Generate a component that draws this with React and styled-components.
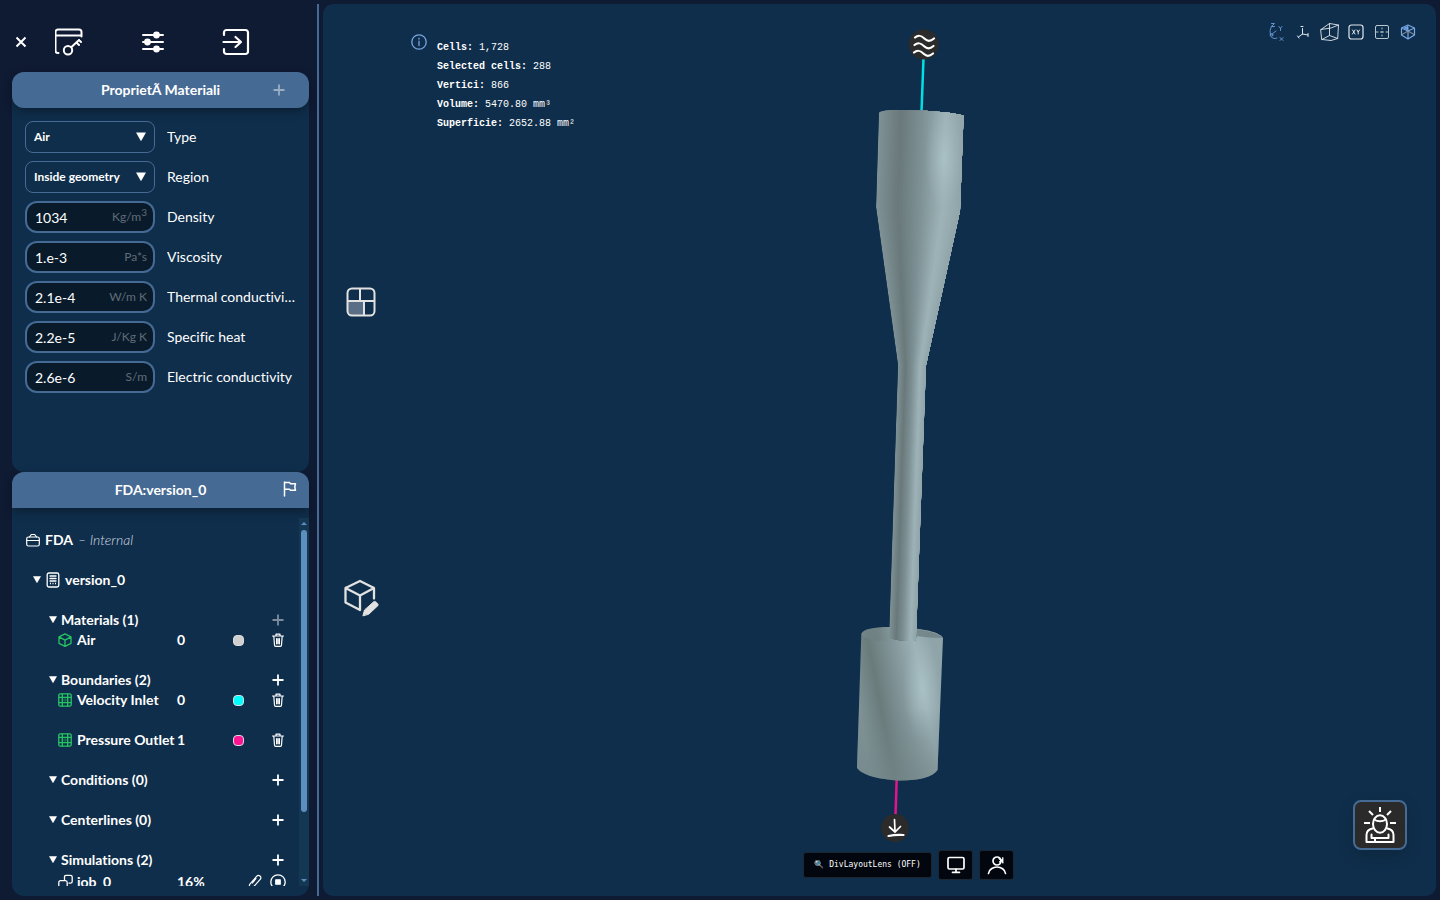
import React from "react";
import styled, { createGlobalStyle } from "styled-components";

const c = {
  page: "#0f1a33",
  panel: "#0f2e4b",
  accent: "#456a94",
  line: "#456a94",
  field: "#091b2b",
  text: "#ffffff",
};

const GlobalStyle = createGlobalStyle`
  *, *::before, *::after { box-sizing: border-box; }
  html, body, #root { height: 100%; }
  body {
    margin: 0;
    background: ${c.page};
    color: ${c.text};
    font-family: Lato, "Open Sans", sans-serif;
    font-size: 14px;
    line-height: 20px;
    font-variant-ligatures: none;
  }
  button { font: inherit; color: inherit; background: none; border: 0; padding: 0; margin: 0; cursor: pointer; }
  h1, h2, h3, ul, li, dl, dt, dd { margin: 0; padding: 0; font: inherit; list-style: none; }
`;

const Page = styled.div`
  display: flex;
  height: 100%;
  padding: 4px 4px 4px 12px;
`;

const Sidebar = styled.aside`
  display: flex;
  flex-direction: column;
  flex: 0 0 297px;
  min-height: 0;
`;

const Divider = styled.div`
  flex: 0 0 2px;
  margin: 0 4px 0 8px;
  background: ${c.line};
`;

const TopBar = styled.nav`
  display: flex;
  align-items: center;
  flex: 0 0 68px;
  padding: 8px 0 0 2px;
`;

const CloseButton = styled.button`
  display: grid;
  place-items: center;
  width: 14px;
  height: 28px;
`;

const NavButton = styled.button`
  display: grid;
  place-items: center;
  width: 83px;
  height: 40px;
`;

const Panel = styled.section`
  display: flex;
  flex-direction: column;
  flex: ${(p) => (p.$grow ? "1 1 0" : "0 0 400px")};
  min-height: 0;
  background: ${c.panel};
  border-radius: 12px;
`;

const PanelHeader = styled.header`
  display: grid;
  grid-template-columns: 36px 1fr 36px;
  align-items: center;
  justify-items: center;
  flex: 0 0 36px;
  padding: 0 12px;
  background: ${c.accent};
  border-radius: ${(p) => (p.$flat ? "12px 12px 0 0" : "12px")};
  box-shadow: 0 4px 10px rgba(0, 0, 0, 0.3);
`;

const PanelTitle = styled.h2`
  grid-column: 2;
  font-weight: 700;
`;

const IconButton = styled.button`
  display: grid;
  place-items: center;
  justify-self: ${(p) => (p.$end ? "end" : "auto")};
  opacity: ${(p) => (p.$dim ? 0.45 : 1)};
`;

const Form = styled.form`
  display: flex;
  flex-direction: column;
  gap: 8px;
  padding: 13px;
`;

const FieldRow = styled.div`
  display: grid;
  grid-template-columns: 130px 1fr;
  gap: 12px;
  align-items: center;
`;

const FieldLabel = styled.label`
  overflow: hidden;
  white-space: nowrap;
  text-overflow: ellipsis;
`;

const SelectBox = styled.div`
  display: grid;
  grid-template-columns: 1fr 10px;
  align-items: center;
  height: 32px;
  padding-right: 8px;
  border: 1px solid ${c.line};
  border-radius: 8px;
`;

const Select = styled.select`
  appearance: none;
  min-width: 0;
  height: 30px;
  padding: 0 0 0 8px;
  border: 0;
  outline: 0;
  background: transparent;
  color: inherit;
  font: 700 12px/20px Lato, sans-serif;
`;

const InputBox = styled.div`
  display: flex;
  align-items: center;
  height: 32px;
  padding: 0 6px 0 8px;
  background: ${c.field};
  border: 2px solid ${c.line};
  border-radius: 12px;
`;

const Input = styled.input`
  flex: 1;
  width: 0;
  height: 28px;
  padding: 0;
  border: 0;
  outline: 0;
  background: transparent;
  color: inherit;
  font: 400 14px/20px Lato, sans-serif;
`;

const Unit = styled.span`
  color: #606c78;
  font-size: 12px;
  line-height: 20px;

  sup { font-size: 10px; line-height: 0; }
`;

const TreeArea = styled.div`
  display: flex;
  flex: 1;
  min-height: 0;
  margin: 10px 0;
`;

const Tree = styled.div`
  flex: 1;
  min-width: 0;
  overflow: hidden;
  padding: 12px 5px 0 0;
  font-weight: 700;
`;

const Scrollbar = styled.div`
  display: flex;
  flex-direction: column;
  align-items: center;
  gap: 3px;
  width: 10px;
  padding: 3px 0;
  background: #143754;
`;

const ScrollTrack = styled.div`
  flex: 1;
  width: 6px;
`;

const ScrollThumb = styled.div`
  height: 82%;
  border-radius: 3px;
  background: #5c8fbd;
`;

const ProjectRow = styled.div`
  display: flex;
  align-items: center;
  gap: 5px;
  padding-left: 14px;
  margin-bottom: 20px;
`;

const Origin = styled.em`
  color: #d3dae1;
  font-weight: 300;
`;

const VersionRow = styled.div`
  display: flex;
  align-items: center;
  gap: 5px;
  padding-left: 21px;
  margin-bottom: 20px;
`;

const Group = styled.section`
  margin-bottom: 20px;
`;

const GroupHeader = styled.header`
  display: grid;
  grid-template-columns: 12px 1fr 32px;
  align-items: center;
  padding-left: 37px;
`;

const GroupTitle = styled.h3`
  font-weight: 700;
`;

const Items = styled.ul`
  display: flex;
  flex-direction: column;
  gap: 20px;
`;

const Item = styled.li`
  display: grid;
  grid-template-columns: 19px 100px 1fr 20px 14px 32px;
  align-items: center;
  height: ${(p) => (p.$tall ? "24px" : "20px")};
  padding-left: 46px;
  white-space: nowrap;
`;

const Cell = styled.span`
  display: grid;
  justify-items: ${(p) => (p.$start ? "start" : "center")};
`;

const Swatch = styled.span`
  width: 11px;
  height: 11px;
  border: 1px solid #d9dde0;
  border-radius: 4px;
  background: ${(p) => p.$color};
`;

const Viewer = styled.main`
  position: relative;
  display: grid;
  grid-template-rows: auto 1fr auto;
  flex: 1;
  min-width: 0;
  background: ${c.panel};
  border-radius: 10px;
  overflow: hidden;
`;

const Scene = styled.svg`
  position: absolute;
  inset: 0;
  width: 100%;
  height: 100%;
`;

const ViewerTop = styled.div`
  position: relative;
  display: flex;
  justify-content: space-between;
  align-items: flex-start;
  padding: 18px 18px 0 88px;
`;

const Stats = styled.div`
  display: flex;
  gap: 10px;
  padding-top: 12px;
`;

const StatList = styled.dl`
  padding-top: 4px;
  font: 400 10px/19px "Liberation Mono", monospace;
`;

const Stat = styled.div`
  display: flex;
  gap: 6px;

  dt { font-weight: 700; }
`;

const ViewTools = styled.div`
  display: flex;
  gap: 6px;
`;

const ViewTool = styled.button`
  display: grid;
  place-items: center;
  width: ${(p) => (p.$wide ? "21px" : "20px")};
  height: 20px;
`;

const SideTools = styled.div`
  position: absolute;
  top: 0;
  bottom: 0;
  left: 18px;
  display: flex;
  flex-direction: column;
  align-items: center;
  justify-content: center;
  gap: 256px;
`;

const SideTool = styled.button`
  display: grid;
  place-items: center;
  width: 40px;
  height: 40px;
`;

const ViewerBottom = styled.div`
  position: relative;
  grid-row: 3;
  display: flex;
  align-items: center;
  justify-content: center;
  gap: 6px;
  padding: 0 0 16px 58px;
`;

const DarkButton = styled.button`
  display: flex;
  align-items: center;
  justify-content: center;
  gap: 5px;
  width: ${(p) => (p.$text ? "129px" : "35px")};
  height: ${(p) => (p.$text ? "26px" : "30px")};
  border: 1px solid #1d2731;
  border-radius: 3px;
  background: #02060e;
  font: 400 8px/12px "DejaVu Sans Mono", monospace;
`;

const AssistantButton = styled.button`
  position: absolute;
  right: 29px;
  bottom: 46px;
  display: grid;
  place-items: center;
  width: 54px;
  height: 50px;
  border: 2px solid ${c.line};
  border-radius: 8px;
  background: #2a2a2a;
  box-shadow: 0 6px 16px rgba(0, 0, 0, 0.15);
`;

const Svg = ({ w, h = w, box, sw = 1.5, color = "currentColor", children }) => (
  <svg width={w} height={h} viewBox={box || `0 0 ${w} ${h}`} fill="none" stroke={color}
    strokeWidth={sw} strokeLinecap="round" strokeLinejoin="round" aria-hidden="true">
    {children}
  </svg>
);

const Caret = ({ w = 8, h = 8 }) => (
  <Svg w={w} h={h} box="0 0 8 8" sw={0}><path d="M0 0.3h8L4 7.300z" fill="#fff" /></Svg>
);

const Plus = () => <Svg w={12} sw={1.800}><path d="M6 .5v11M.5 6h11" strokeLinecap="butt" /></Svg>;

const Trash = () => (
  <Svg w={14} sw={1.200}>
    <path d="M1.500 3h11M5 3V1.200h4V3M2.800 3l.7 9c0 .8.5 1.300 1.200 1.300h4.600c.7 0 1.200-.5 1.200-1.300l.7-9M5.600 5.500v5.300M7 5.500v5.300M8.400 5.500v5.300" />
  </Svg>
);

const GreenCube = () => (
  <Svg w={14} sw={1.300} color="#27c463">
    <path d="M7 .8l6 3.100v6.400L7 13.300 1 10.300V3.900zM1 3.900l6 3.200 6-3.200M7 7.100v6" />
  </Svg>
);

const GreenGrid = () => (
  <Svg w={14} sw={1.300} color="#27c463">
    <rect x=".8" y=".8" width="12.400" height="12.400" rx="1.500" />
    <path d="M4.300.8v12.400M9.700.8v12.400M.8 4.300h12.400M.8 9.700h12.400" />
    <path d="M7 4.300v5.400M4.300 7h5.400" opacity=".35" />
  </Svg>
);

const JobIcon = () => (
  <Svg w={15} h={16} sw={1.300}>
    <path d="M6.500 5.500V3C6.500 1.800 7 1.300 8 1.300h4.500c1 0 1.700.5 1.700 1.700v4.500c0 1-.7 1.700-1.700 1.700H11M.8 14.500V8.500c0-1.200.7-1.900 1.700-1.900h5c1 0 1.700.7 1.700 1.900v6z" />
  </Svg>
);

const Pencil = () => (
  <Svg w={14} h={16} sw={1.200}>
    <path d="M.8 14.500l.9-4.200L8.800 2.200c.8-.9 2.200-1 3.200-.2s1.200 2.200.4 3.200L5.200 13.200zM8 4.500L4.500 9" />
  </Svg>
);

const StopIcon = () => (
  <Svg w={16} sw={1.300}>
    <circle cx="8" cy="8" r="7.200" /><rect x="5.800" y="5.800" width="4.400" height="4.400" fill="#fff" />
  </Svg>
);

const fields = [
  { id: "density", label: "Density", value: "1034", unit: <>Kg/m<sup>3</sup></> },
  { id: "viscosity", label: "Viscosity", value: "1.e-3", unit: "Pa*s" },
  { id: "thermal", label: "Thermal conductivity", value: "2.1e-4", unit: "W/m K" },
  { id: "heat", label: "Specific heat", value: "2.2e-5", unit: "J/Kg K" },
  { id: "electric", label: "Electric conductivity", value: "2.6e-6", unit: "S/m" },
];

const groups = [
  { title: "Materials (1)", dim: true, items: [{ name: "Air", value: "0", color: "#cfcfcf", icon: <GreenCube /> }] },
  {
    title: "Boundaries (2)",
    items: [
      { name: "Velocity Inlet", value: "0", color: "#00ffff", icon: <GreenGrid /> },
      { name: "Pressure Outlet", value: "1", color: "#ff1493", icon: <GreenGrid /> },
    ],
  },
  { title: "Conditions (0)", items: [] },
  { title: "Centerlines (0)", items: [] },
  { title: "Simulations (2)", items: [{ name: "job_0", value: "16%", job: true, icon: <JobIcon /> }] },
];

const stats = [
  ["Cells:", "1,728"],
  ["Selected cells:", "288"],
  ["Vertici:", "866"],
  ["Volume:", "5470.80 mm³"],
  ["Superficie:", "2652.88 mm²"],
];

function SelectField({ id, label, value }) {
  return (
    <FieldRow>
      <SelectBox>
        <Select id={id} defaultValue={value}><option>{value}</option></Select>
        <Caret w={10} h={10} />
      </SelectBox>
      <FieldLabel htmlFor={id}>{label}</FieldLabel>
    </FieldRow>
  );
}

function TreeItem({ item }) {
  return (
    <Item $tall={item.job}>
      <Cell $start>{item.icon}</Cell>
      <span>{item.name}</span>
      <span>{item.value}</span>
      <Cell>{item.color && <Swatch $color={item.color} />}</Cell>
      <Cell>{item.job && <IconButton aria-label="Edit"><Pencil /></IconButton>}</Cell>
      <Cell>
        <IconButton aria-label={item.job ? "Stop" : "Delete"}>{item.job ? <StopIcon /> : <Trash />}</IconButton>
      </Cell>
    </Item>
  );
}

// Shading across the revolved surface, from its left silhouette (0) to its right one (1).
const shades = [
  [0, [126, 145, 148]],
  [0.25, [106, 121, 123]],
  [0.5, [125, 144, 148]],
  [0.78, [158, 179, 184]],
  [1, [144, 164, 168]],
];
const leftEdge = [[879, 104], [876, 207], [898, 365], [889, 642]];
const rightEdge = [[964, 104], [960, 211], [926, 366], [916, 642]];
const STRIPS = 48;

function shadeAt(t) {
  const i = Math.max(1, shades.findIndex(([s]) => s >= t));
  const [a, ca] = shades[i - 1];
  const [b, cb] = shades[i];
  const k = (t - a) / (b - a);
  return `rgb(${ca.map((v, n) => Math.round(v + (cb[n] - v) * k)).join(",")})`;
}

function Loft() {
  return Array.from({ length: STRIPS }, (_, i) => {
    const t = i / STRIPS;
    const start = leftEdge.map(([x, y], n) => [
      x + (rightEdge[n][0] - x) * t,
      y + (rightEdge[n][1] - y) * t,
    ]);
    const points = [...start, ...[...rightEdge].reverse()].map((p) => p.join(",")).join(" ");
    return <polygon key={i} points={points} fill={shadeAt(t)} />;
  });
}

function Model() {
  return (
    <Scene viewBox="323 4 1113 892" preserveAspectRatio="xMidYMid meet" role="img" aria-label="Nozzle geometry">
      <defs>
        <clipPath id="body">
          <path d="M879 112.500Q882 110 907 110.300Q945 111 964 115.500L960.500 211L926 366L916 640Q902 642 888.800 638L898 365L876 207z" />
        </clipPath>
        <linearGradient id="outlet" gradientUnits="userSpaceOnUse" x1="860" y1="714" x2="942" y2="698">
          <stop offset="0" stopColor="#7f9396" />
          <stop offset=".26" stopColor="#6a7b7b" />
          <stop offset=".48" stopColor="#7d9093" />
          <stop offset=".8" stopColor="#9cb2b7" />
          <stop offset="1" stopColor="#8fa4a8" />
        </linearGradient>
        <radialGradient id="shine">
          <stop offset="0" stopColor="#b0c8cd" stopOpacity=".65" />
          <stop offset="1" stopColor="#a6bdc2" stopOpacity="0" />
        </radialGradient>
        <linearGradient id="fade" x1="0" x2="0" y1="0" y2="1">
          <stop offset=".5" stopColor="#728588" stopOpacity="0" />
          <stop offset="1" stopColor="#728588" stopOpacity=".65" />
        </linearGradient>
        <linearGradient id="rim" x1="0" x2="1" y1="0" y2="0">
          <stop offset="0" stopColor="#809397" />
          <stop offset=".45" stopColor="#667679" stopOpacity=".7" />
          <stop offset="1" stopColor="#8a9ea2" stopOpacity="0" />
        </linearGradient>
      </defs>

      <path d="M923.500 58L921.500 112" stroke="#00dfe4" strokeWidth="2.500" />
      <path d="M896.700 778L895.500 816" stroke="#e3148c" strokeWidth="2.500" />

      <path d="M861.300 634C863 629 874 627 889 627C915 627 940 631 943 638L937.500 770C933 777 918 781 898 780.500C876 779 860 774 857 767.500z" fill="url(#outlet)" />
      <ellipse cx="922" cy="688" rx="19" ry="54" fill="url(#shine)" />
      <path d="M861.300 634L943 638L937.500 770C933 777 918 781 898 780.500C876 779 860 774 857 767.500z" fill="url(#fade)" />
      <path d="M861.300 634C863 629 874 627 889 627L900 627L900 642C880 642 865 640 861.300 634z" fill="url(#rim)" opacity=".45" />
      <path d="M916 629C930 631 940 634 942.500 638C934 638 924 637 916 636z" fill="#697a7d" opacity=".7" />

      <g clipPath="url(#body)">
        <Loft />
        <ellipse cx="944" cy="158" rx="19" ry="50" fill="url(#shine)" />
      </g>

      <circle cx="923.700" cy="44.500" r="15" fill="#2b2b2b" />
      <g fill="none" stroke="#fff" strokeWidth="2.200" strokeLinecap="round">
        <path d="M915 37.500C919 34 922 36 925 39S931 41 934 38.500" />
        <path d="M914.500 45C918.500 41.500 921.500 43.500 924.500 46.500S930.500 48.500 933.500 46" />
        <path d="M914 52.500C918 49 921 51 924 54S930 56 933 53.500" />
      </g>
      <circle cx="895" cy="828" r="14" fill="#2b2b2b" />
      <g fill="none" stroke="#fff" strokeWidth="1.700" strokeLinecap="round">
        <path d="M894.500 819.500L895 831.500M889.500 827L895 832L900.500 826.500" />
        <path d="M888.500 836Q895 834.500 903.500 835" strokeWidth="2.200" />
      </g>
    </Scene>
  );
}

export default function App() {
  return (
    <>
      <GlobalStyle />
      <Page>
        <Sidebar>
          <TopBar>
            <CloseButton aria-label="Close">
              <Svg w={12} sw={2}><path d="M1.500 1.500l9 9M10.500 1.500l-9 9" strokeLinecap="butt" /></Svg>
            </CloseButton>
            <NavButton aria-label="Access keys">
              <Svg w={29} h={28} sw={2} box="1 0 29 28">
                <path d="M4.500 25H4a2.500 2.500 0 0 1-2.500-2.500V4A2.500 2.500 0 0 1 4 1.500h21A2.500 2.500 0 0 1 27.500 4v4.500M1.500 7.500h26M17.500 19l7.500-7M22.500 14.500l2.500 2.500M25 12l2 2" />
                <circle cx="14" cy="22.300" r="4.200" />
              </Svg>
            </NavButton>
            <NavButton aria-label="Settings">
              <Svg w={22} sw={2}>
                <path d="M1 4h20M1 11h20M1 18h20" />
                <g fill="#fff"><circle cx="14.500" cy="4" r="2.400" /><circle cx="5.500" cy="11" r="2.400" /><circle cx="14.500" cy="18" r="2.400" /></g>
              </Svg>
            </NavButton>
            <NavButton aria-label="Exit">
              <Svg w={28} sw={2.200}>
                <path d="M2 7V4.500A2.500 2.500 0 0 1 4.500 2h19A2.500 2.500 0 0 1 26 4.500v19a2.500 2.500 0 0 1-2.500 2.500h-19A2.500 2.500 0 0 1 2 23.500V21M1.500 14H19M13.500 9l5.500 5-5.500 5" />
              </Svg>
            </NavButton>
          </TopBar>

          <Panel>
            <PanelHeader>
              <PanelTitle>ProprietÃ Materiali</PanelTitle>
              <IconButton $dim aria-label="Add material"><Plus /></IconButton>
            </PanelHeader>
            <Form>
              <SelectField id="type" label="Type" value="Air" />
              <SelectField id="region" label="Region" value="Inside geometry" />
              {fields.map((f) => (
                <FieldRow key={f.id}>
                  <InputBox>
                    <Input id={f.id} defaultValue={f.value} />
                    <Unit>{f.unit}</Unit>
                  </InputBox>
                  <FieldLabel htmlFor={f.id}>{f.label}</FieldLabel>
                </FieldRow>
              ))}
            </Form>
          </Panel>

          <Panel $grow>
            <PanelHeader $flat>
              <PanelTitle>FDA:version_0</PanelTitle>
              <IconButton $end aria-label="Flag">
                <Svg w={14} h={18} sw={1.500}><path d="M1.500 15V1M1.500 1.500h5l1 1.200h5l-.7 3.300.7 3.300H7.500L6.500 8.200h-5" /></Svg>
              </IconButton>
            </PanelHeader>
            <TreeArea>
              <Tree>
                <ProjectRow>
                  <Svg w={14} sw={1.200}>
                    <rect x=".7" y="4" width="12.600" height="9" rx="1.800" />
                    <path d="M1 7.500h12M3.500 4l1.800-2.500h3.400L10.500 4" />
                  </Svg>
                  <span>FDA</span>
                  <Origin>– Internal</Origin>
                </ProjectRow>
                <VersionRow>
                  <Caret />
                  <Svg w={14} h={16} sw={1.300}>
                    <rect x="1.200" y="1" width="11.600" height="14" rx="1.800" />
                    <path d="M4 4h6M4 6.500h6M4 9h6" />
                    <path d="M4 11.500h6" strokeDasharray="1 1.500" strokeLinecap="butt" />
                  </Svg>
                  <span>version_0</span>
                </VersionRow>
                {groups.map((g) => (
                  <Group key={g.title}>
                    <GroupHeader>
                      <Caret />
                      <GroupTitle>{g.title}</GroupTitle>
                      <IconButton $dim={g.dim} aria-label={`Add to ${g.title}`}><Plus /></IconButton>
                    </GroupHeader>
                    <Items>{g.items.map((i) => <TreeItem key={i.name} item={i} />)}</Items>
                  </Group>
                ))}
              </Tree>
              <Scrollbar>
                <Svg w={6} h={6} sw={0}><path d="M0 4h6L3 1z" fill="#5c8fbd" /></Svg>
                <ScrollTrack><ScrollThumb /></ScrollTrack>
                <Svg w={6} h={6} sw={0}><path d="M0 2h6L3 5z" fill="#5c8fbd" /></Svg>
              </Scrollbar>
            </TreeArea>
          </Panel>
        </Sidebar>

        <Divider />

        <Viewer>
          <Model />
          <ViewerTop>
            <Stats>
              <Svg w={16} sw={1.300} color="#79a5e0">
                <circle cx="8" cy="8" r="7.200" />
                <path d="M8 7.200v4.300M8 4.200v.8" />
              </Svg>
              <StatList>
                {stats.map(([k, v]) => <Stat key={k}><dt>{k}</dt><dd>{v}</dd></Stat>)}
              </StatList>
            </Stats>
            <ViewTools>
              <ViewTool aria-label="Orientation axes">
                <Svg w={20} sw={1} color="#6393d0">
                  <path d="M4.500 4Q2 8 3.500 14Q7 18 10 16M4.500 12.500L9 9M4.500 1.500h3l-3 3h3M12 4.500l1.500 2 1.500-2M13.500 6.500v2M13 15.500l3 3M16 15.500l-3 3" />
                  <circle cx="4.500" cy="13" r="1.300" />
                </Svg>
              </ViewTool>
              <ViewTool aria-label="Show axes">
                <Svg w={20} sw={1} color="#dfe6ec">
                  <path d="M9.500 6.500v5.500M9.500 12l5.500 1M9.500 12L5.500 15M8 4.500h2M15 11.500v3M4.500 14l1.500 2" />
                </Svg>
              </ViewTool>
              <ViewTool $wide aria-label="Bounding box">
                <Svg w={20} sw={0.900} color="#dfe6ec">
                  <path d="M1 7.500L9.500 1.500l9 1.500-.8 13.500L11 18.500l-9-1zM1 7.500l10-1.500 7.500-3M11 6" />
                  <path d="M9.500 1.500v12M9.500 13.500L2 17.500M9.500 13.500l8.200 3" />
                </Svg>
              </ViewTool>
              <ViewTool aria-label="XY plane">
                <Svg w={16} sw={1.200} color="#e3e8ec">
                  <rect x="1" y="1" width="14" height="14" rx="2.500" />
                  <path d="M4.500 6l2.500 4M7 6l-2.500 4M9 6l1.200 2 1.300-2M10.200 8v2" strokeWidth="1" />
                </Svg>
              </ViewTool>
              <ViewTool aria-label="Section view">
                <Svg w={16} sw={1} color="#b9c5cf">
                  <rect x="1.500" y="1.500" width="13" height="13" rx="1.500" />
                  <path d="M8 4v8" strokeDasharray="1 2.500" />
                  <path d="M2 8h2M12 8h2M6.500 8h3" />
                </Svg>
              </ViewTool>
              <ViewTool aria-label="Solid view">
                <Svg w={16} sw={1.200} color="#79a8e6">
                  <path d="M2 10.500l6-3.500 6 3.500" stroke="#7c858c" />
                  <path d="M8 1l6.500 3v7L8 15l-6.500-4V4zM1.500 4L8 7l6.500-3M8 7v8" />
                  <path d="M4.500 4L8 2.500V5.500z" fill="#79a8e6" strokeWidth="1" />
                </Svg>
              </ViewTool>
            </ViewTools>
          </ViewerTop>
          <SideTools>
            <SideTool aria-label="Layout">
              <Svg w={30} sw={2} color="#e2e2e2">
                <path d="M2 14h15v14H5a3 3 0 0 1-3-3z" fill="#5a6f85" stroke="none" />
                <rect x="1.500" y="1.500" width="27" height="27" rx="4.500" />
                <path d="M2 14h26M14 2v12M18 14v14" />
              </Svg>
            </SideTool>
            <SideTool aria-label="Edit geometry">
              <Svg w={36} h={38} sw={2.300} color="#e2e2e2">
                <path d="M17 31L2.500 23.500V9L17 2l14 7V19.500M2.500 9L17 16.500l14-7.500M17 16.500V31" />
                <path d="M20 36.500l1.500-5.500L31 22.500c1-.8 5 2.500 4 4L26 35z" fill="#e2e2e2" strokeWidth="1" />
              </Svg>
            </SideTool>
          </SideTools>
          <ViewerBottom>
            <DarkButton $text><span>🔍</span><span>DivLayoutLens (OFF)</span></DarkButton>
            <DarkButton aria-label="Display">
              <Svg w={18} sw={1.700}>
                <rect x="1" y="1.500" width="16" height="11.500" rx="1.500" /><path d="M9 13v3M5.500 16.300h7" />
              </Svg>
            </DarkButton>
            <DarkButton aria-label="User">
              <Svg w={20} sw={1.700}>
                <circle cx="10" cy="6" r="4" />
                <path d="M1.500 18.500c.5-4 4.500-6.500 8.500-6.500s8 2.500 8.500 6.500" />
                <path d="M12 3.500l4 4M15.800 2.500v5.500M12.500 7l3.500-3" strokeWidth="1.200" />
              </Svg>
            </DarkButton>
          </ViewerBottom>
          <AssistantButton aria-label="Assistant">
            <Svg w={32} h={36} sw={2}>
              <g strokeLinecap="butt">
                <path d="M16 0v5M5 4l4 4M27 4l-4 4M0 16h6M26 16h6" />
              </g>
              <ellipse cx="16" cy="17" rx="7" ry="8.800" />
              <path d="M10 12.500q6 3.500 12 0" />
              <path d="M8.500 21.500C4 22.500 2.500 25 2.500 28v7h27v-7c0-3-1.500-5.500-6-6.500M7.500 27.500v3.500h17v-3.500M11 31v3.500" />
            </Svg>
          </AssistantButton>
        </Viewer>
      </Page>
    </>
  );
}
